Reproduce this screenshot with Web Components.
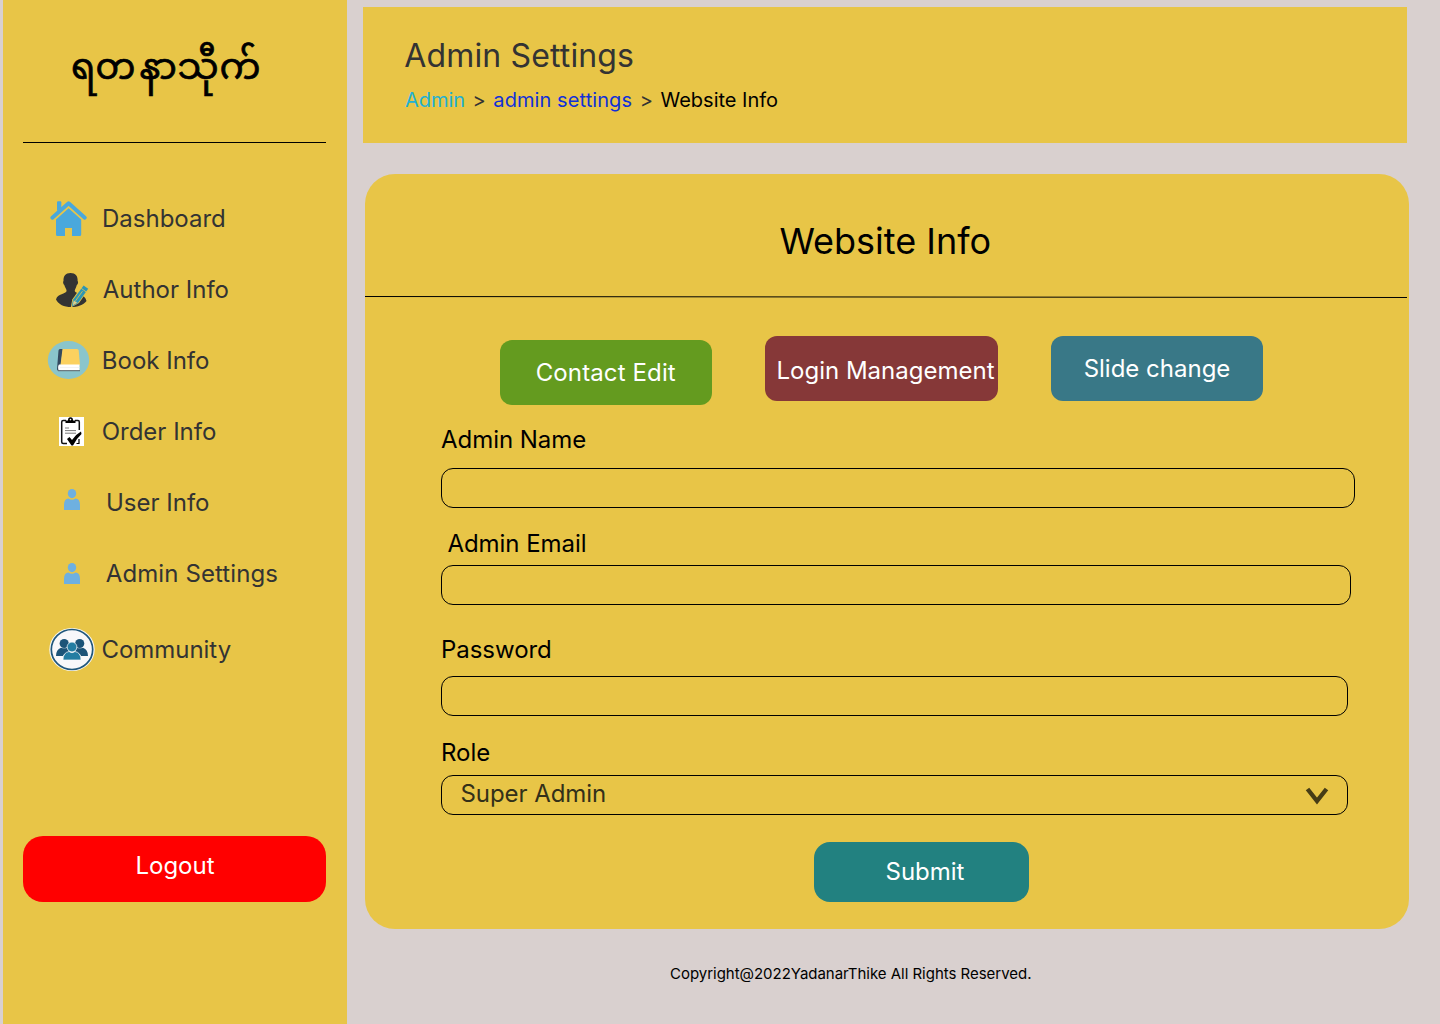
<!DOCTYPE html>
<html lang="en">
<head>
<meta charset="utf-8">
<title>Website Info</title>
<style>
html,body{margin:0;height:100%}
body{background:#d9d0cf;font-family:Inter,"Liberation Sans",sans-serif;font-size:24px;line-height:30px;font-optical-sizing:none;overflow:hidden}
</style>
</head>
<body>
<admin-page></admin-page>
<script>
const define=(name,html,setup)=>customElements.define(name,class extends HTMLElement{
  constructor(){super();this.attachShadow({mode:'open'}).innerHTML=html;}
  connectedCallback(){if(setup)setup(this,this.shadowRoot);}
});

define('brand-logo',`<style>:host{display:block;height:142px;box-sizing:border-box;padding:38px 0 0 68px;color:#000;font:35.5px/66px "Noto Sans Myanmar","Noto Sans",sans-serif;white-space:nowrap;-webkit-text-stroke:.7px #000}::slotted(span){margin-left:4px;font-size:36.5px;letter-spacing:.8px}</style><slot></slot>`);

const person=y=>`<g fill="#6eb0e0"><ellipse cx="72" cy="${y+4.6}" rx="4.2" ry="4.6"/><path d="M64 ${y+21}V${y+16}Q64 ${y+10} 68.5 ${y+9.6}Q72 ${y+12} 75.5 ${y+9.6}Q80 ${y+10} 80 ${y+16}V${y+21}Z"/></g>`;
const icons={
home:[195,`<g fill="#4aa8dc"><path d="M57 211V202.300Q57 201.300 58 201.300H60.300Q61.300 201.300 61.300 202.300V208Z"/><path d="M52.300 217.700L68.600 203.200L84.800 217.700" fill="none" stroke="#4aa8dc" stroke-width="3.900" stroke-linecap="round" stroke-linejoin="round"/><path d="M68.600 208.300L81.200 219.500V234.500Q81.200 236 79.700 236H72V228H65V236H57.500Q56 236 56 234.500V219.500Z"/></g>`],
author:[266,`<path fill="#333" d="M70.500 273C65.500 273 63.200 276 63.500 281C62.600 281.500 63.300 284.500 64.300 285C65 287.500 66.500 289 66.600 291C66 294 57.500 293.500 56 299.500C58.500 304.500 64 307 71 307C78 307 83 305 86.500 301C85.500 294 75.500 294 74.700 291C75 289 76.200 287.500 76.800 285C78 284.500 78.600 281.500 77.600 281C78 276 75.500 273 70.500 273Z"/><path d="M70.800 307.500L72.300 299.500L82.600 284.800L89 288.800L79 303Z" fill="#e8c547"/><path d="M71.800 306.300L73.300 299.500L83.600 285.500L88.200 288.800L78.200 302.800Z" fill="#2d96b3"/><path d="M81.300 288.400L86.300 292M75 301.500L82.500 291.200" stroke="#e8c547" stroke-width=".8"/><path d="M73.500 300L77.900 302.800L72.200 306Z" fill="#e5cf87" stroke="#2d96b3" stroke-width=".6"/>`],
book:[337,`<ellipse cx="68.500" cy="360" rx="20.700" ry="19" fill="#8ac5cb"/><path d="M60 349H63L60.500 366V370.500H58Q57 370.500 57 369L58.500 350.500Q58.700 349 60 349Z" fill="#34495e"/><path d="M62.500 349H77Q78.500 349 78.700 350.500L80 365H60.500Z" fill="#fbd15f"/><path d="M59 364.500H79.500V370.500H58.500Q57.500 366 59 364.500Z" fill="#fff"/><path d="M58 370.700H80" stroke="#5b6268"/><path d="M60 367.500H79.500" stroke="#eee" stroke-width=".7"/>`],
order:[408,`<path fill="#fff" d="M59 417H84V446H59Z"/><path d="M66 420.500H63.200Q61.700 420.500 61.700 422V442Q61.700 443.500 63.200 443.500H67M75 420.500H78Q79.300 420.500 79.300 422V430" fill="none" stroke="#111" stroke-width="1.500"/><path fill="#000" d="M65.500 423V420.500H68Q68 417.300 70.500 417.300Q73 417.300 73 420.500H75.500V423Z"/><circle cx="70.500" cy="419.600" r=".8" fill="#fff"/><path d="M65 428H69M65 430.600H76M65 433.200H76" stroke="#555" stroke-width=".8"/><path d="M67 439L69.500 437L72 440Q75.500 434.500 81 431.500L81.500 434Q76.500 438.500 73 445.500H71.500Z"/><path d="M76.500 443.500H79V439" fill="none" stroke="#000" stroke-width="1.200"/>`],
user:[479,person(489)],
admin:[550,person(563)],
community:[626,`<ellipse cx="72" cy="649.500" rx="22.700" ry="21.600" fill="#f8f8f4"/><ellipse cx="72" cy="649.500" rx="20.700" ry="20" fill="#f8f8fa" stroke="#20577c" stroke-width="1.700"/><g fill="#1c5478"><circle cx="64.200" cy="643.500" r="4.600"/><circle cx="79.700" cy="643.500" r="4.600"/><path d="M56 656Q56 649.500 61 647.700Q64.500 649 67 647.700L69 652Q64 653 63 656ZM88 656Q88 649.500 83 647.700Q79.500 649 77 647.700L75 652Q80 653 81 656Z"/></g><g fill="#237da2" stroke="#f8f8fa" stroke-width=".7"><circle cx="72" cy="647" r="4.900"/><path d="M63 660Q63 652.500 69 651.500Q72 654 75 651.500Q81 652.500 81 660Z"/></g>`]};
define('nav-item',`<style>:host{display:flex;align-items:center;height:46px;color:#333;white-space:nowrap}svg{flex:none;width:50px;height:46px}span{margin-left:var(--gap,6px);padding-top:2px}</style><svg></svg><span><slot></slot></span>`,(el,r)=>{
  const [y,art]=icons[el.getAttribute('icon')],s=r.querySelector('svg');
  s.setAttribute('viewBox','46 '+y+' 50 46');s.innerHTML=art;
});
define('side-bar',`<style>
:host{display:flex;flex-direction:column;width:344px;height:1024px;background:#e8c547;box-sizing:border-box;padding:0 21px 0 20px}
hr{border:0;margin:0;height:1px;background:#000}
nav{display:flex;flex-direction:column;gap:25px;margin:52px 0 0 23px}
nav nav-item:last-child{margin-top:5px}
app-button{margin-top:164px}
</style>
<brand-logo style="margin-left:-20px">ရတ<span>နာသီုက်</span></brand-logo><hr>
<nav><nav-item icon="home">Dashboard</nav-item><nav-item icon="author" style="--gap:6.8px">Author Info</nav-item><nav-item icon="book" style="--gap:5.8px">Book Info</nav-item><nav-item icon="order" style="--gap:5.700px">Order Info</nav-item><nav-item icon="user" style="--gap:10px">User Info</nav-item><nav-item icon="admin" style="--gap:9.800px;letter-spacing:.1px">Admin Settings</nav-item><nav-item icon="community" style="--gap:5.500px;letter-spacing:-.04px">Community</nav-item></nav>
<app-button style="--bg:#f00;--w:303px;--h:66px;--r:20px;--shift:7px;--left:1px">Logout</app-button>`);
define('app-button',`<style>:host{display:block;width:var(--w,212px)}button{display:flex;justify-content:center;align-items:center;width:100%;height:var(--h,65px);box-sizing:border-box;border:0;padding:var(--top,0px) var(--indent,0px) var(--shift,0px) var(--left,var(--indent,0px));border-radius:var(--r,12px);background:var(--bg);color:#fff;font:inherit;letter-spacing:inherit;white-space:nowrap}</style><button><slot></slot></button>`);
define('page-header',`<style>
:host{display:block;width:1044px;height:136px;box-sizing:border-box;background:#e8c547;padding:29px 42px;color:#333}
h1{margin:0 0 0 -.7px;font-size:32px;line-height:40px;font-weight:400;letter-spacing:.14px}
nav{display:flex;gap:7.600px;font-size:20px;line-height:24px;margin-top:12px}
.a{color:#22b0d3;letter-spacing:-.06px}.b{color:#1130d8;letter-spacing:.08px}.c{color:#000}
</style><h1>Admin Settings</h1><nav><span class="a">Admin</span><span>&gt;</span><span class="b">admin settings</span><span>&gt;</span><span class="c">Website Info</span></nav>`);
define('form-field',`<style>
:host{display:block}
label{display:block;height:30px;margin-left:var(--indent,0px);letter-spacing:-.04px}
.box{display:flex;justify-content:space-between;align-items:center;box-sizing:border-box;height:40px;width:var(--w);margin-top:var(--gap);border:1px solid #000;border-radius:12px;padding:0 18px 3px 18.500px;color:#333019;letter-spacing:-.06px}
svg{width:24px;height:20px;margin-top:4px}
</style><label></label><div class="box"><slot></slot></div>`,(el,r)=>{
  r.querySelector('label').textContent=el.getAttribute('label');
  if(el.hasAttribute('select'))r.querySelector('.box').insertAdjacentHTML('beforeend','<svg viewBox="0 0 24 20"><path d="M2.500 3L12 15L21.500 3" fill="none" stroke="#463c15" stroke-width="4.400"/></svg>');
});
define('settings-card',`<style>
:host{display:block;width:1044px;height:755px;box-sizing:border-box;background:#e8c547;border-radius:30px;padding-top:44px;color:#000}
h2{margin:0;font-size:36px;line-height:46px;font-weight:400;text-align:center;padding-right:3.400px}
.rule{display:block;width:1042px;height:2px;margin-top:32px}
.tabs{display:flex;align-items:flex-start;gap:53px;margin:38px 0 0 135px}
.form{display:flex;flex-direction:column;margin:20px 0 0 76px}
</style>
<h2>Website Info</h2><svg class="rule" viewBox="0 0 1042 2"><path d="M0 .5L1042 1.500" stroke="#000"/></svg>
<div class="tabs"><app-button style="--bg:#649b1f;margin-top:4px;--left:0px;--indent:.5px;letter-spacing:.12px">Contact Edit</app-button><app-button style="--bg:#863838;--w:233px;--indent:0px;--left:8px;--top:4px">Login Management</app-button><app-button style="--bg:#397887">Slide change</app-button></div>
<div class="form">
<form-field label="Admin Name" style="--w:914px;--gap:13px"></form-field>
<form-field label="Admin Email" style="--w:910px;--gap:6px;--indent:6.400px;margin-top:21px"></form-field>
<form-field label="Password" style="--w:907px;--gap:11px;margin-top:30px"></form-field>
<form-field label="Role" select style="--w:907px;--gap:7px;margin-top:22px">Super Admin</form-field>
<app-button style="--bg:#228180;--w:215px;--h:60px;--r:16px;--indent:0px;--left:7px;margin:27px 0 0 373px">Submit</app-button>
</div>`);
define('admin-page',`<style>
:host{display:flex;height:1024px;padding-left:3px;gap:16px}
main{display:flex;flex-direction:column;padding-top:7px}
settings-card{margin:31px 0 0 2px}
footer{margin:35px 0 0 307px;font-size:15px;line-height:20px;letter-spacing:-.025px;color:#000}
</style><side-bar></side-bar><main><page-header></page-header><settings-card></settings-card><footer>Copyright@2022YadanarThike All Rights Reserved.</footer></main>`);
</script>
</body>
</html>
